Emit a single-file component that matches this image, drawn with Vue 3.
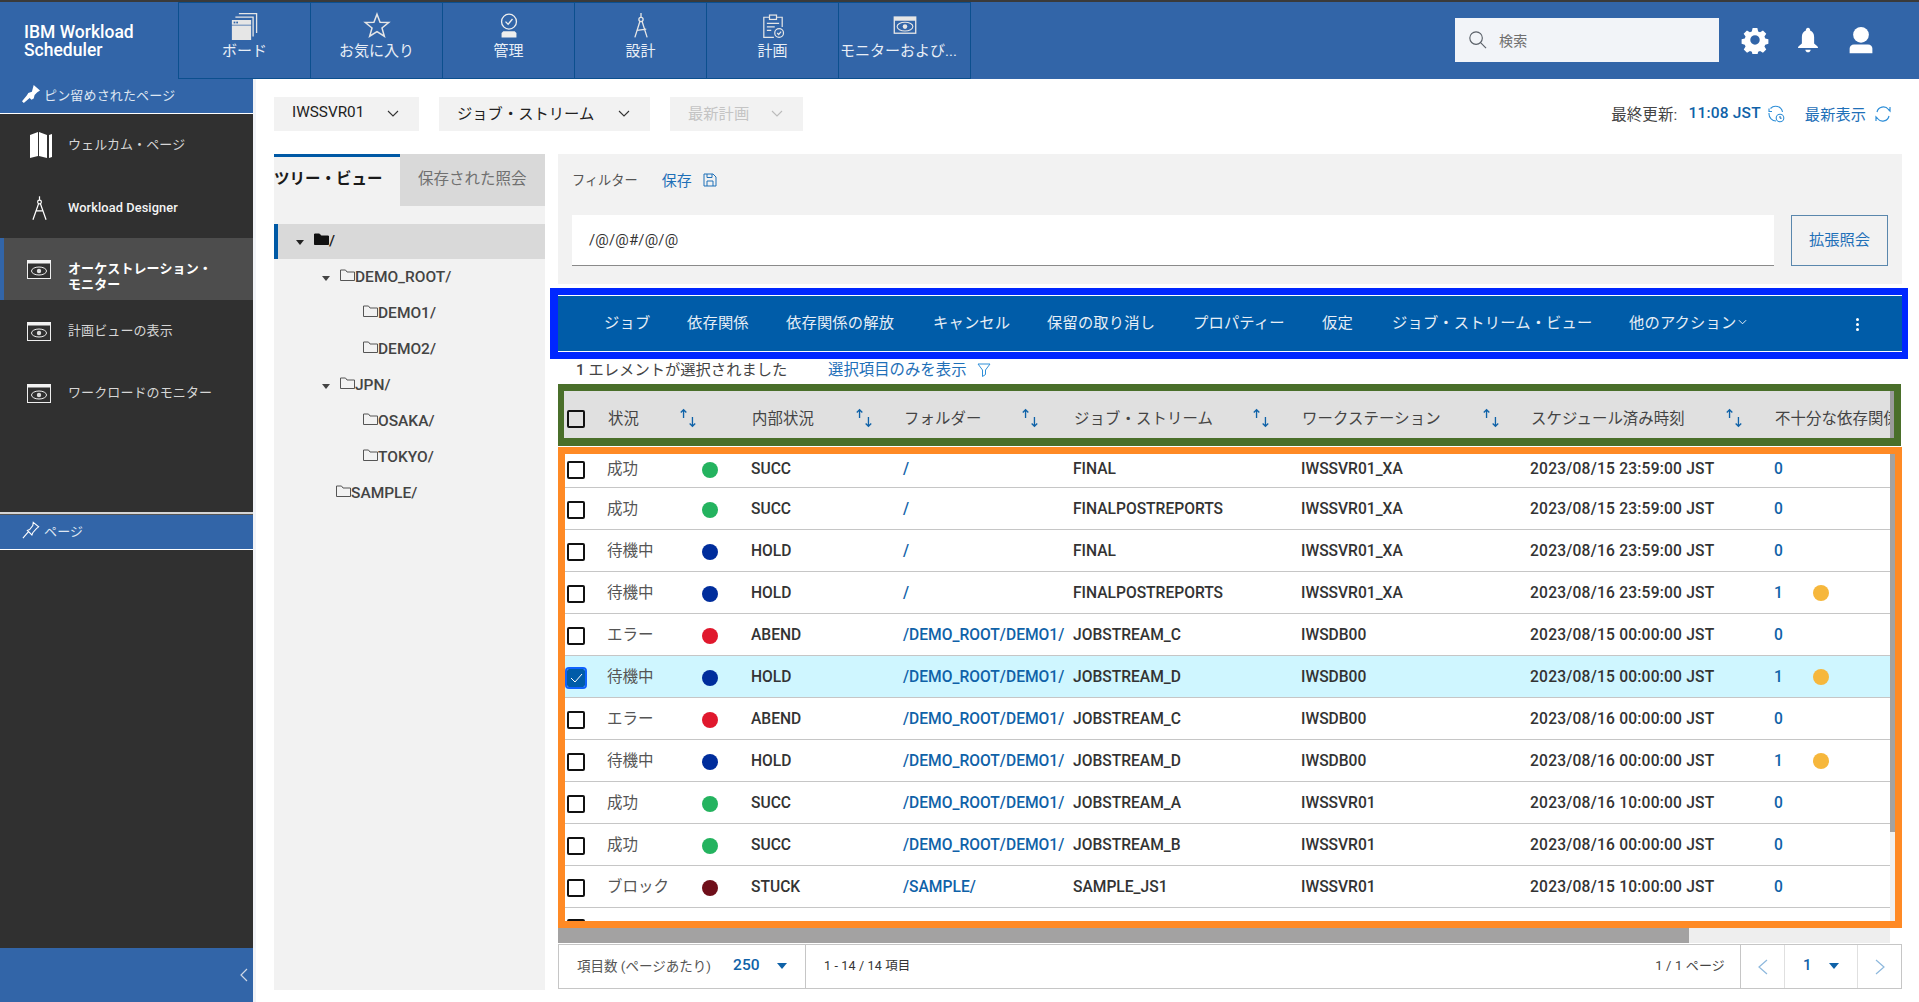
<script setup>
const nav = [
  { label: 'ボード', icon: 'board' },
  { label: 'お気に入り', icon: 'star' },
  { label: '管理', icon: 'admin' },
  { label: '設計', icon: 'compass' },
  { label: '計画', icon: 'plan' },
  { label: 'モニターおよび...', icon: 'monitor' }
]
const side = [
  { label: 'ウェルカム・ページ', icon: 'map' },
  { label: 'Workload Designer', icon: 'compass', strong: true },
  { label: 'オーケストレーション・モニター', icon: 'eye', strong: true, active: true },
  { label: '計画ビューの表示', icon: 'eye' },
  { label: 'ワークロードのモニター', icon: 'eye' }
]
const tree = [
  { label: '/', level: 0, open: true, selected: true },
  { label: 'DEMO_ROOT/', level: 1, open: true },
  { label: 'DEMO1/', level: 2 },
  { label: 'DEMO2/', level: 2 },
  { label: 'JPN/', level: 1, open: true },
  { label: 'OSAKA/', level: 2 },
  { label: 'TOKYO/', level: 2 },
  { label: 'SAMPLE/', level: 3 }
]
const actions = ['ジョブ', '依存関係', '依存関係の解放', 'キャンセル', '保留の取り消し', 'プロパティー', '仮定', 'ジョブ・ストリーム・ビュー']
const cols = ['状況', '内部状況', 'フォルダー', 'ジョブ・ストリーム', 'ワークステーション', 'スケジュール済み時刻', '不十分な依存関係']
const colors = { SUCC: '#24b35f', HOLD: '#002d9c', ABEND: '#e0182d', STUCK: '#6f0f1a' }
const labels = { SUCC: '成功', HOLD: '待機中', ABEND: 'エラー', STUCK: 'ブロック' }
const rows = [
  ['SUCC', '/', 'FINAL', 'IWSSVR01_XA', '2023/08/15 23:59:00 JST', 0],
  ['SUCC', '/', 'FINALPOSTREPORTS', 'IWSSVR01_XA', '2023/08/15 23:59:00 JST', 0],
  ['HOLD', '/', 'FINAL', 'IWSSVR01_XA', '2023/08/16 23:59:00 JST', 0],
  ['HOLD', '/', 'FINALPOSTREPORTS', 'IWSSVR01_XA', '2023/08/16 23:59:00 JST', 1],
  ['ABEND', '/DEMO_ROOT/DEMO1/', 'JOBSTREAM_C', 'IWSDB00', '2023/08/15 00:00:00 JST', 0],
  ['HOLD', '/DEMO_ROOT/DEMO1/', 'JOBSTREAM_D', 'IWSDB00', '2023/08/15 00:00:00 JST', 1],
  ['ABEND', '/DEMO_ROOT/DEMO1/', 'JOBSTREAM_C', 'IWSDB00', '2023/08/16 00:00:00 JST', 0],
  ['HOLD', '/DEMO_ROOT/DEMO1/', 'JOBSTREAM_D', 'IWSDB00', '2023/08/16 00:00:00 JST', 1],
  ['SUCC', '/DEMO_ROOT/DEMO1/', 'JOBSTREAM_A', 'IWSSVR01', '2023/08/16 10:00:00 JST', 0],
  ['SUCC', '/DEMO_ROOT/DEMO1/', 'JOBSTREAM_B', 'IWSSVR01', '2023/08/16 00:00:00 JST', 0],
  ['STUCK', '/SAMPLE/', 'SAMPLE_JS1', 'IWSSVR01', '2023/08/15 10:00:00 JST', 0]
].map((r, i) => ({ state: r[0], folder: r[1], stream: r[2], ws: r[3], time: r[4], count: r[5], checked: i === 5 }))
</script>

<template>
  <div class="app">
    <header class="top">
      <div class="brand">IBM Workload<br>Scheduler</div>
      <nav class="nav">
        <a v-for="n in nav" :key="n.label" class="nav-item">
          <svg class="nav-icon" viewBox="0 0 32 32">
            <g v-if="n.icon === 'board'" fill="#e6e6e6">
              <path d="M9 1h21v23h-1.500V2.500H9z"/>
              <path d="M5 5h21v23h-1.500V6.500H5z"/>
              <path d="M1 9h22v5.500H1zM1 15.500h22V32H1z"/>
              <rect x="3" y="11" width="2" height="2" fill="#3265a8"/>
              <rect x="6" y="11" width="2" height="2" fill="#3265a8"/>
            </g>
            <path v-else-if="n.icon === 'star'" d="M16 2.500l3.500 9.200 9.900.3-7.700 6.200 2.700 9.500-8.400-5.400-8.400 5.400 2.700-9.500-7.700-6.200 9.900-.3z" fill="none" stroke="#e6e6e6" stroke-width="1.700"/>
            <g v-else-if="n.icon === 'admin'">
              <circle cx="16" cy="11" r="8.500" fill="none" stroke="#eee" stroke-width="1.500"/>
              <path d="M12 11l3 3 5-6" fill="none" stroke="#eee" stroke-width="1.500"/>
              <path d="M9.500 22h13l2 2v5h-17v-5z" fill="#eee"/>
            </g>
            <g v-else-if="n.icon === 'compass'" fill="none" stroke="#e6e6e6" stroke-width="1.500">
              <path d="M16 1v5"/>
              <circle cx="16" cy="8.500" r="2.400"/>
              <path d="M14.800 10.500L9 29M17.200 10.500L23 29M11.500 21l10.500-1.500"/>
            </g>
            <g v-else-if="n.icon === 'plan'" fill="none" stroke="#e6e6e6" stroke-width="1.400">
              <path d="M12 6H5.500v23H17M20 6h6.500v11"/>
              <rect x="12" y="3.500" width="8" height="5"/>
              <path d="M9 13h14M9 17h9M9 21h5"/>
              <circle cx="23" cy="24" r="5"/>
              <path d="M20.800 24l1.700 1.700 2.800-3.200"/>
            </g>
            <g v-else-if="n.icon === 'monitor'">
              <rect x="3" y="5" width="26" height="20" fill="#e6e6e6"/>
              <rect x="4.500" y="10" width="23" height="13.500" fill="#3265a8"/>
              <ellipse cx="16" cy="16.700" rx="9" ry="5" fill="none" stroke="#e6e6e6" stroke-width="1.300"/>
              <circle cx="16" cy="16.700" r="2.600" fill="#e6e6e6"/>
            </g>
          </svg>
          <span class="nav-label">{{ n.label }}</span>
        </a>
      </nav>
      <div class="top-right">
        <div class="search">
          <svg class="search-icon" viewBox="0 0 20 20"><circle cx="8.500" cy="8.500" r="6.600" fill="none" stroke="#5a6068" stroke-width="1.200"/><path d="M13.500 13.500l5.500 5.500" stroke="#5a6068" stroke-width="1.200"/></svg>
          <span>検索</span>
        </div>
        <svg class="top-icon" viewBox="0 0 32 32"><path fill="#fff" fill-rule="evenodd" d="M13 2h6l1 4.200 2.400 1 3.700-2.300 4.200 4.200-2.300 3.700 1 2.400 4 1v5.800l-4 1-1 2.400 2.300 3.700-4.200 4.200-3.700-2.300-2.400 1-1 4.200h-6l-1-4.200-2.400-1-3.700 2.300-4.200-4.200 2.300-3.700-1-2.400-4-1v-5.800l4-1 1-2.400L1.600 9.100l4.200-4.200 3.700 2.300 2.400-1zM16 11a6 6 0 1 0 0 12 6 6 0 0 0 0-12z" transform="translate(1.600 .6) scale(.9)"/></svg>
        <svg class="top-icon" viewBox="0 0 32 32"><path fill="#fff" d="M16 2a2.500 2.500 0 0 1 2.400 3.200C21.500 6.300 23 9 23 12.500V20l3 2.500c1 .8 1.500 1.500 1.500 2.500h-23c0-1 .5-1.700 1.500-2.500L9 20v-7.500C9 9 10.500 6.300 13.600 5.200A2.500 2.500 0 0 1 16 2zM13 27h6c0 1.700-1.300 3-3 3s-3-1.300-3-3z"/></svg>
        <svg class="top-icon" viewBox="0 0 32 32"><circle cx="16" cy="10" r="9" fill="#fff"/><path fill="#fff" d="M8 21h16c3 0 5 2 5 5v5H3v-5c0-3 2-5 5-5z"/></svg>
      </div>
    </header>

    <div class="body">
      <aside class="sidebar">
        <div class="side-head pinned">
          <svg class="pin" viewBox="0 0 20 20"><path fill="#fff" d="M13 0l7 6-3 2-3 3-1 4-2.500 1.500-5-5L7 9l4-1.500zM5.500 11.500l3 3L2 20l-2-2z"/></svg>
          <span>ピン留めされたページ</span>
        </div>
        <ul class="side-list">
          <li v-for="s in side" :key="s.label" class="side-item" :class="{ active: s.active, strong: s.strong }">
            <span class="side-icon">
              <svg v-if="s.icon === 'map'" class="i-map" viewBox="0 0 22 26"><path fill="#fff" d="M0 3l8-3v24l-8 2zM9 0l8 3v23l-8-2zM19 3l3-1v23l-3 1z"/></svg>
              <svg v-else-if="s.icon === 'compass'" class="i-compass" viewBox="0 0 16 26"><g fill="none" stroke="#fff" stroke-width="1.300"><path d="M8 0v4"/><circle cx="8" cy="6" r="2"/><path d="M7 8L1 25M9 8l6 17M4 15.500h8"/></g></svg>
              <svg v-else class="i-eye" viewBox="0 0 24 19"><rect x=".5" y=".5" width="23" height="18" fill="#303030" stroke="#eee"/><rect x="0" y="0" width="24" height="3.500" fill="#f2f2f2"/><ellipse cx="12" cy="11" rx="7.500" ry="4" fill="none" stroke="#eee"/><circle cx="12" cy="11" r="2.200" fill="#ddd"/></svg>
            </span>
            <span class="side-text">{{ s.label }}</span>
          </li>
        </ul>
        <div class="side-rule"></div>
        <div class="side-head pages">
          <svg class="pin" viewBox="0 0 20 20"><path fill="none" stroke="#fff" stroke-width="1.200" d="M12.500 1.500l6 5-2.500 2-4 4.500-1 2.500-5-5 2.500-1 3.500-4.500zM7 12l-6 7"/></svg>
          <span>ページ</span>
        </div>
        <div class="side-fill"></div>
        <div class="side-foot">
          <svg viewBox="0 0 8 14" width="8" height="14"><path d="M7 1L1 7l6 6" fill="none" stroke="#cfd8e6" stroke-width="1.200"/></svg>
        </div>
      </aside>

      <main class="main">
        <div class="toolbar">
          <div class="select"><span>IWSSVR01</span><svg viewBox="0 0 12 8" class="chev"><path d="M1 1l5 5 5-5" fill="none" stroke="#333" stroke-width="1.100"/></svg></div>
          <div class="select w2"><span>ジョブ・ストリーム</span><svg viewBox="0 0 12 8" class="chev"><path d="M1 1l5 5 5-5" fill="none" stroke="#333" stroke-width="1.100"/></svg></div>
          <div class="select w3 disabled"><span>最新計画</span><svg viewBox="0 0 12 8" class="chev"><path d="M1 1l5 5 5-5" fill="none" stroke="#bbb" stroke-width="1.100"/></svg></div>
          <div class="updated">
            <span class="up-label">最終更新:</span>
            <b class="up-time">11:08 JST</b>
            <svg class="up-icon first-icon" viewBox="0 0 18 18"><path d="M3.500 3.500A7 7 0 0 1 15.500 7M9 16a7 7 0 0 1-7-7V8M2 3.500v3h3" fill="none" stroke="#2f8fd8" stroke-width="1.100"/><circle cx="13" cy="13" r="3.800" fill="none" stroke="#2f8fd8" stroke-width="1.100"/><path d="M13 11v2.200h1.600" fill="none" stroke="#0f62a8"/></svg>
            <span class="up-link">最新表示</span>
            <svg class="up-icon" viewBox="0 0 18 18"><path d="M3 7a6.500 6.500 0 0 1 11.500-2.500L16 6V2M15 11a6.500 6.500 0 0 1-11.500 2.500L2 12v4" fill="none" stroke="#2f8fd8" stroke-width="1.200"/></svg>
          </div>
        </div>

        <div class="columns">
          <section class="tree-panel">
            <div class="tabs">
              <div class="tab on">ツリー・ビュー</div>
              <div class="tab">保存された照会</div>
            </div>
            <ul class="tree">
              <li v-for="t in tree" :key="t.label" class="tree-row" :class="['lv' + t.level, { sel: t.selected }]">
                <i v-if="t.open" class="caret"></i>
                <svg class="folder" viewBox="0 0 15 12">
                  <path d="M.5 1h5l1.500 2h7.500v8.500H.5z" :fill="t.selected ? '#111' : 'none'" :stroke="t.selected ? '#111' : '#555'"/>
                </svg>
                <span>{{ t.label }}</span>
              </li>
            </ul>
          </section>

          <section class="content">
            <div class="filter">
              <div class="filter-head">
                <span class="filter-label">フィルター</span>
                <span class="link">保存</span>
                <svg class="save" viewBox="0 0 14 14"><path d="M1 1h9l3 3v9H1zM4 1v3.500h5V1M4 13V8h6v5" fill="none" stroke="#1f70b8" stroke-width="1"/></svg>
              </div>
              <div class="filter-row">
                <div class="filter-input">/@/@#/@/@</div>
                <div class="adv">拡張照会</div>
              </div>
            </div>

            <div class="actionframe">
              <div class="actionbar">
                <span v-for="a in actions" :key="a" class="action">{{ a }}</span>
                <span class="action more">他のアクション<svg viewBox="0 0 10 6" width="9" height="6"><path d="M1 1l4 4 4-4" fill="none" stroke="#fff"/></svg></span>
                <span class="dots"><i></i><i></i><i></i></span>
              </div>
            </div>

            <div class="selinfo">
              <span class="selcount"><b>1</b> エレメントが選択されました</span>
              <span class="link sel-link">選択項目のみを表示</span>
              <svg class="funnel" viewBox="0 0 14 14"><path d="M1 1h12L8.500 7v4.500l-3 2V7z" fill="none" stroke="#2f8fd8" stroke-width="1"/></svg>
            </div>

            <div class="headframe">
              <div class="grid head">
                <span class="box"></span>
                <div v-for="c in cols" :key="c" class="th">
                  <span class="th-text">{{ c }}</span>
                  <svg v-if="c !== '不十分な依存関係'" class="sort" viewBox="0 0 18 18"><path d="M5 9V1.500M2.500 4L5 1.500 7.500 4M13 8v8.500M10.500 14l2.500 2.500 2.500-2.500" fill="none" stroke="#0f62a8" stroke-width="1.200"/></svg>
                </div>
              </div>
            </div>

            <div class="bodyframe">
              <div class="rows">
                <div v-for="(r, i) in rows" :key="i" class="grid row" :class="{ first: i === 0, checked: r.checked }">
                  <span class="box" :class="{ on: r.checked }">
                    <svg v-if="r.checked" viewBox="0 0 14 12" width="14" height="12"><path d="M2 6l4 4 7-8" fill="none" stroke="#fff" stroke-width="1"/></svg>
                  </span>
                  <div class="td state">
                    <span class="state-text">{{ labels[r.state] }}</span>
                    <i class="dot" :style="{ background: colors[r.state] }"></i>
                  </div>
                  <div class="td">{{ r.state }}</div>
                  <div class="td blue">{{ r.folder }}</div>
                  <div class="td">{{ r.stream }}</div>
                  <div class="td">{{ r.ws }}</div>
                  <div class="td time">{{ r.time }}</div>
                  <div class="td count">
                    <span class="blue">{{ r.count }}</span>
                    <i v-if="r.count" class="dot warn"></i>
                  </div>
                </div>
                <div class="grid row stub"><span class="box"></span></div>
              </div>
              <div class="vscroll"><div class="vthumb"></div></div>
            </div>

            <div class="hscroll"><div class="thumb"></div></div>

            <div class="pager">
              <div class="pg per"><span class="muted">項目数 (ページあたり)</span><b class="blue val">250</b><i class="tri"></i></div>
              <div class="pg range">1 - 14 / 14 項目</div>
              <div class="pg pages-of">1 / 1 ページ</div>
              <div class="pg arrow"><svg viewBox="0 0 10 16" width="10" height="16"><path d="M9 1L1 8l8 7" fill="none" stroke="#8db8dd" stroke-width="1.200"/></svg></div>
              <div class="pg num"><b class="blue">1</b><i class="tri"></i></div>
              <div class="pg arrow"><svg viewBox="0 0 10 16" width="10" height="16"><path d="M1 1l8 7-8 7" fill="none" stroke="#8db8dd" stroke-width="1.200"/></svg></div>
            </div>
          </section>
        </div>
      </main>
    </div>
  </div>
</template>

<style>
html, body { margin: 0; background: #fff; overflow: hidden; }
</style>

<style scoped>
* { box-sizing: border-box; }
.app {
  width: 1919px; height: 1002px; overflow: hidden; display: flex; flex-direction: column;
  font-family: Roboto, "Noto Sans CJK JP", sans-serif; font-size: 14px; color: #333; letter-spacing: .16px;
}
ul { list-style: none; margin: 0; padding: 0; }
.top { height: 79px; flex: none; background: #3265a8; border-top: 2px solid #3a3a3a; display: flex; color: #fff; }
.brand { width: 178px; padding: 21px 0 0 24px; font-size: 17.500px; line-height: 18px; font-weight: 500; letter-spacing: 0; }
.nav { display: flex; }
.nav-item { width: 132px; height: 77px; border: 1px solid #0c4f8e; border-right-width: 0; display: flex; flex-direction: column; align-items: center; padding-top: 9px; overflow: hidden; }
.nav-item:last-child { border-right-width: 1px; width: 133px; }
.nav-item:last-child .nav-label { align-self: flex-start; margin-left: 1px; }
.nav-icon { width: 28px; height: 28px; flex: none; }
.nav-label { margin-top: 1px; font-size: 15px; line-height: 20px; color: #e8eef6; white-space: nowrap; letter-spacing: 0; }
.top-right { margin-left: auto; display: flex; align-items: center; padding: 0 44px 2px 0; }
.search { width: 264px; height: 44px; background: #f2f4f8; display: flex; align-items: center; padding-left: 13px; color: #6f6f6f; font-size: 14px; margin-right: 22px; }
.search-icon { width: 19px; height: 19px; margin-right: 12px; }
.top-icon { width: 28px; height: 28px; margin-right: 25px; }
.top-icon:last-child { margin-right: 0; }

.body { flex: 1; display: flex; min-height: 0; }
.sidebar { width: 253px; flex: none; background: #303030; display: flex; flex-direction: column; color: #d6d6d6; }
.side-head { height: 35px; flex: none; background: #3265a8; border-bottom: 1px solid #fff; display: flex; align-items: center; padding: 0 0 4px 22px; font-size: 13px; color: #dfe7f2; }
.pin { width: 18px; height: 18px; margin-right: 4px; }
.side-list { height: 398px; flex: none; }
.side-item { height: 62px; display: flex; align-items: center; font-size: 13px; line-height: 16px; letter-spacing: .1px; }
.side-item.strong { color: #f4f4f4; font-weight: 500; font-size: 12.800px; padding-top: 2px; }
.side-item.active { background: #4d4d4d; border-left: 4px solid #3265a8; color: #fff; font-weight: 700; font-size: 13px; padding-top: 16px; }
.side-item.active .side-icon { margin-left: -4px; margin-top: -16px; }
.side-icon { width: 68px; flex: none; display: flex; justify-content: center; padding-left: 10px; }
.i-map { width: 22px; height: 26px; margin-left: 4px; }
.i-compass { width: 15px; height: 25px; }
.i-eye { width: 24px; height: 19px; }
.side-text { width: 150px; }
.side-rule { height: 3px; flex: none; background: #d5d5d5; border-bottom: 1px solid #555; }
.side-fill { flex: 1; }
.side-foot { height: 54px; flex: none; background: #3265a8; display: flex; align-items: center; justify-content: flex-end; padding-right: 5px; }

.main { flex: 1; border-left: 3px solid #f1f3f7; padding: 0 0 0 18px; min-width: 0; }
.toolbar { height: 75px; display: flex; align-items: flex-start; padding-top: 18px; }
.select { width: 145px; height: 34px; background: #f2f2f2; display: flex; align-items: center; justify-content: space-between; padding: 0 20px 5px 18px; color: #222; font-size: 15.300px; margin-right: 20px; letter-spacing: 0; }
.select.w2 { width: 211px; }
.select.w3 { width: 133px; color: #c4c4c4; margin-right: 0; }
.chev { width: 12px; height: 8px; margin-top: 5px; }
.updated { margin-left: auto; display: flex; align-items: center; padding: 5px 27px 0 0; font-size: 15.500px; letter-spacing: .1px; }
.up-label { color: #444; }
.up-time { color: #0f62a8; font-weight: 500; margin-left: 11px; letter-spacing: .2px; }
.up-icon { width: 18px; height: 18px; margin: 2px 0 0 8px; }
.first-icon { margin-left: 6px; }
.up-link { color: #1f70b8; margin-left: 20px; font-size: 15.200px; }

.columns { display: flex; height: 836px; }
.tree-panel { width: 271px; height: 836px; background: #f2f2f2; flex: none; }
.tabs { display: flex; height: 52px; }
.tab { width: 145px; background: #d9d9d9; color: #707070; font-size: 15.500px; padding: 12px 0 0 18px; letter-spacing: 0; }
.tab.on { width: 126px; background: #f2f2f2; border-top: 3px solid #0059a5; color: #1a1a1a; font-weight: 700; padding: 9px 0 0 0; }
.tree { padding-top: 18px; }
.tree-row { height: 36px; display: flex; align-items: center; color: #444; font-size: 15.500px; font-weight: 500; padding-bottom: 3px; letter-spacing: 0; }
.tree-row.sel { height: 35px; background: #d9d9d9; border-left: 4px solid #0059a5; padding-left: 18px; padding-bottom: 2px; color: #222; margin-bottom: 1px; }
.tree-row.lv1 { padding-left: 48px; }
.tree-row.lv2 { padding-left: 89px; }
.tree-row.lv3 { padding-left: 62px; }
.caret { width: 0; height: 0; border-left: 4.500px solid transparent; border-right: 4.500px solid transparent; border-top: 5px solid #444; margin-right: 10px; margin-top: 3px; }
.tree-row.sel .caret { border-top-color: #222; margin-right: 10px; }
.folder { width: 15px; height: 12px; margin-top: -3px; flex: none; }

.content { width: 1344px; margin-left: 13px; display: flex; flex-direction: column; position: relative; }
.filter { height: 130px; background: #f2f2f2; padding: 15px 14px 0 14px; margin-bottom: 4px; }
.filter-head { display: flex; align-items: center; height: 20px; font-size: 13px; }
.filter-label { color: #555; font-size: 13.200px; margin-right: 24px; letter-spacing: 0; }
.link { color: #1f70b8; font-size: 15px; letter-spacing: 0; }
.save { width: 14px; height: 14px; margin: 2px 0 0 11px; }
.filter-row { display: flex; margin-top: 26px; gap: 17px; }
.filter-input { width: 1202px; height: 51px; background: #fff; border-bottom: 1px solid #8a8a8a; padding: 16px 0 0 17px; font-size: 15px; color: #333; }
.adv { width: 97px; height: 51px; border: 1px solid #5a87ad; background: #f2f2f2; display: flex; align-items: center; justify-content: center; color: #1f70b8; font-size: 15.300px; padding-bottom: 6px; letter-spacing: 0; }

.actionframe { margin: 0 -6px 0 -8px; border: 7px solid #0027ff; border-left-width: 8px; border-right-width: 6px; height: 71px; }
.actionbar { height: 57px; background: #005ca8; border-top: 1px solid #fff; border-bottom: 1px solid #fff; display: flex; align-items: center; color: #e6eef6; font-size: 15.300px; padding: 0 43px 0 0; position: relative; letter-spacing: .16px; line-height: 20px; }
.action { white-space: nowrap; position: absolute; top: 17px; }
.action:nth-child(1) { left: 46px; }
.action:nth-child(2) { left: 129px; }
.action:nth-child(3) { left: 228px; }
.action:nth-child(4) { left: 375px; }
.action:nth-child(5) { left: 489px; }
.action:nth-child(6) { left: 635px; }
.action:nth-child(7) { left: 764px; }
.action:nth-child(8) { left: 834px; }
.action:nth-child(9) { left: 1071px; }
.more svg { margin: 0 0 3px 2px; }
.dots { margin-left: auto; display: flex; flex-direction: column; gap: 2px; margin-top: 1px; }
.dots i { width: 3px; height: 3px; background: #fff; border-radius: 50%; }

.selinfo { height: 25px; display: flex; align-items: center; padding: 0 0 7px 18px; font-size: 15.300px; flex: none; letter-spacing: 0; }
.selcount { width: 252px; color: #444; }
.selcount b { font-weight: 500; }
.sel-link { font-size: 15.400px; }
.funnel { width: 14px; height: 14px; margin: 3px 0 0 10px; }

.grid { display: grid; grid-template-columns: 42px 144px 152px 170px 228px 229px 244px 1fr; align-items: center; }
.headframe { border: 7px solid #4a6f2a; border-bottom-width: 8px; border-left-width: 6px; height: 62px; margin-right: 1px; flex: none; }
.head { height: 47px; padding-top: 6px; background: #e0e0e0; border-right: 4px solid #9b9b9b; overflow: hidden; color: #444; }
.head .box { margin-top: 2px; margin-left: 3px; }
.th { display: flex; align-items: center; white-space: nowrap; padding-left: 2px; position: relative; height: 100%; font-size: 15.400px; padding-bottom: 2px; letter-spacing: .1px; }
.sort { position: absolute; width: 20px; height: 20px; top: 11px; }
.th:nth-child(2) .sort { right: 52px; }
.th:nth-child(3) .sort { right: 28px; }
.th:nth-child(4) .sort { right: 32px; }
.th:nth-child(5) .sort { right: 29px; }
.th:nth-child(6) .sort { right: 28px; }
.th:nth-child(7) .sort { right: 29px; }
.box { width: 18px; height: 18px; border: 2px solid #111; border-radius: 2px; margin-left: 2px; display: flex; align-items: center; justify-content: center; }
.box.on { background: #005ca8; border-color: #005ca8; outline: 2px solid #0f62fe; outline-offset: 0; }
.row .box { margin-top: 2px; }

.bodyframe { border: 7px solid #ff8a25; height: 481px; flex: none; margin-top: 1px; display: flex; }
.rows { width: 1325px; height: 467px; overflow: hidden; background: #fff; flex: none; }
.vscroll { flex: 1; background: #f0f0f0; }
.vthumb { height: 378px; background: #a3a2a2; }
.row { height: 42px; background: #fff; border-bottom: 1px solid #c6c6c6; color: #333; font-weight: 500; font-size: 15.600px; letter-spacing: 0; }
.row.first { height: 34px; padding-bottom: 9px; }
.row.checked { background: #cff6ff; }
.row.stub { border: 0; height: 30px; align-items: start; padding-top: 9px; }
.td { white-space: nowrap; padding-top: 1px; }
.time { letter-spacing: .2px; }
.state { display: flex; align-items: center; padding-top: 2px; }
.state-text { width: 95px; color: #555; font-weight: 400; font-size: 15.500px; padding-bottom: 5px; }
.dot { width: 16px; height: 16px; border-radius: 50%; display: inline-block; flex: none; }
.warn { background: #f6b73c; margin-left: 30px; }
.count { display: flex; align-items: center; }
.blue { color: #0f62a8; }

.hscroll { height: 15px; margin-right: 12px; background: #eee; flex: none; }
.thumb { width: 1131px; height: 15px; background: #a3a2a2; }
.pager { height: 45px; margin-top: 1px; border: 1px solid #c6c6c6; display: flex; align-items: center; flex: none; font-size: 13px; }
.pg { height: 100%; display: flex; align-items: center; border-right: 1px solid #c6c6c6; padding-bottom: 4px; }
.pg:last-child { border-right: 0; }
.per { width: 247px; padding-left: 18px; }
.muted { color: #555; font-size: 13.500px; letter-spacing: 0; }
.val { margin-left: 22px; font-weight: 500; font-size: 15.500px; }
.tri { width: 0; height: 0; border-left: 5.500px solid transparent; border-right: 5.500px solid transparent; border-top: 6px solid #0f62a8; margin-left: 17px; margin-top: 2px; }
.range { padding-left: 18px; font-size: 12.500px; color: #333; border: 0; width: 760px; }
.pages-of { width: 175px; justify-content: flex-end; padding-right: 15px; color: #444; font-size: 13px; }
.arrow { width: 44px; justify-content: center; border-right: 1px solid #e0e0e0; padding-bottom: 0; }
.arrow:last-child { flex: 1; }
.num { width: 73px; padding-left: 18px; border-right: 1px solid #e0e0e0; font-size: 15px; }
.num b { font-weight: 500; }
</style>
